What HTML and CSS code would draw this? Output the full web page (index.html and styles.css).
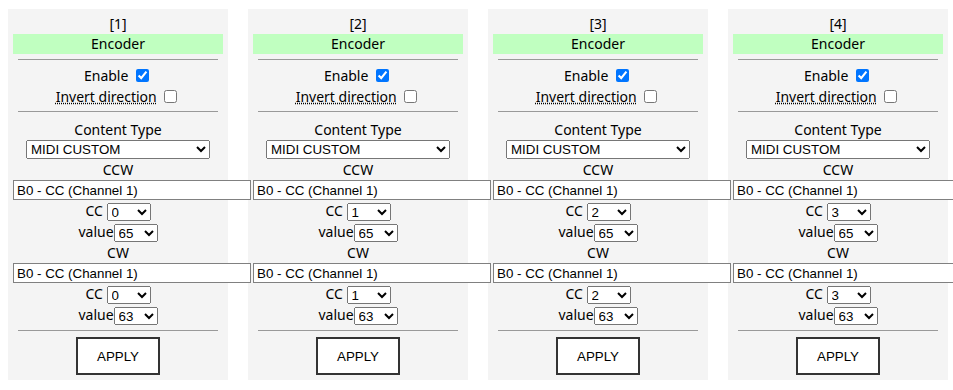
FILE: index.html
```html
<!DOCTYPE html>
<html lang="en">

<head>
    <meta charset="UTF-8">
    <meta name="viewport" content="width=device-width, initial-scale=1.0">
    <title>Encoders</title>
    <link rel="stylesheet" href="styles.css">
</head>

<body>

    <div class="board">

        <div class="enc">
            <div class="idx">[1]</div>
            <div class="head">Encoder</div>
            <hr>
            <div class="row">Enable <input type="checkbox" checked></div>
            <div class="row"><abbr title="Swap CW and CCW">Invert direction</abbr> <input type="checkbox"></div>
            <hr class="mid">
            <div class="label">Content Type</div>
            <select class="type"><option>MIDI CUSTOM</option><option>KEYBOARD</option></select>
            <div class="label">CCW</div>
            <input class="msg" type="text" value="B0 - CC (Channel 1)">
            <div class="pair">CC <select class="num"><option selected>0</option><option>1</option><option>2</option><option>3</option></select></div>
            <div class="pair">value<select class="num"><option>63</option><option selected>65</option></select></div>
            <div class="label">CW</div>
            <input class="msg" type="text" value="B0 - CC (Channel 1)">
            <div class="pair">CC <select class="num"><option selected>0</option><option>1</option><option>2</option><option>3</option></select></div>
            <div class="pair">value<select class="num"><option selected>63</option><option>65</option></select></div>
            <hr class="end">
            <button class="apply">APPLY</button>
        </div>

        <div class="enc">
            <div class="idx">[2]</div>
            <div class="head">Encoder</div>
            <hr>
            <div class="row">Enable <input type="checkbox" checked></div>
            <div class="row"><abbr title="Swap CW and CCW">Invert direction</abbr> <input type="checkbox"></div>
            <hr class="mid">
            <div class="label">Content Type</div>
            <select class="type"><option>MIDI CUSTOM</option><option>KEYBOARD</option></select>
            <div class="label">CCW</div>
            <input class="msg" type="text" value="B0 - CC (Channel 1)">
            <div class="pair">CC <select class="num"><option>0</option><option selected>1</option><option>2</option><option>3</option></select></div>
            <div class="pair">value<select class="num"><option>63</option><option selected>65</option></select></div>
            <div class="label">CW</div>
            <input class="msg" type="text" value="B0 - CC (Channel 1)">
            <div class="pair">CC <select class="num"><option>0</option><option selected>1</option><option>2</option><option>3</option></select></div>
            <div class="pair">value<select class="num"><option selected>63</option><option>65</option></select></div>
            <hr class="end">
            <button class="apply">APPLY</button>
        </div>

        <div class="enc">
            <div class="idx">[3]</div>
            <div class="head">Encoder</div>
            <hr>
            <div class="row">Enable <input type="checkbox" checked></div>
            <div class="row"><abbr title="Swap CW and CCW">Invert direction</abbr> <input type="checkbox"></div>
            <hr class="mid">
            <div class="label">Content Type</div>
            <select class="type"><option>MIDI CUSTOM</option><option>KEYBOARD</option></select>
            <div class="label">CCW</div>
            <input class="msg" type="text" value="B0 - CC (Channel 1)">
            <div class="pair">CC <select class="num"><option>0</option><option>1</option><option selected>2</option><option>3</option></select></div>
            <div class="pair">value<select class="num"><option>63</option><option selected>65</option></select></div>
            <div class="label">CW</div>
            <input class="msg" type="text" value="B0 - CC (Channel 1)">
            <div class="pair">CC <select class="num"><option>0</option><option>1</option><option selected>2</option><option>3</option></select></div>
            <div class="pair">value<select class="num"><option selected>63</option><option>65</option></select></div>
            <hr class="end">
            <button class="apply">APPLY</button>
        </div>

        <div class="enc">
            <div class="idx">[4]</div>
            <div class="head">Encoder</div>
            <hr>
            <div class="row">Enable <input type="checkbox" checked></div>
            <div class="row"><abbr title="Swap CW and CCW">Invert direction</abbr> <input type="checkbox"></div>
            <hr class="mid">
            <div class="label">Content Type</div>
            <select class="type"><option>MIDI CUSTOM</option><option>KEYBOARD</option></select>
            <div class="label">CCW</div>
            <input class="msg" type="text" value="B0 - CC (Channel 1)">
            <div class="pair">CC <select class="num"><option>0</option><option>1</option><option>2</option><option selected>3</option></select></div>
            <div class="pair">value<select class="num"><option>63</option><option selected>65</option></select></div>
            <div class="label">CW</div>
            <input class="msg" type="text" value="B0 - CC (Channel 1)">
            <div class="pair">CC <select class="num"><option>0</option><option>1</option><option>2</option><option selected>3</option></select></div>
            <div class="pair">value<select class="num"><option selected>63</option><option>65</option></select></div>
            <hr class="end">
            <button class="apply">APPLY</button>
        </div>

    </div>

</body>

</html>
```

FILE: styles.css
```css
body {
    margin: 0;
    overflow: hidden;
    background-color: #fff;
    color: #000;
    font-family: 'Noto Sans', 'Open Sans', sans-serif;
    font-size: 14px;
}

.board {
    display: flex;
    gap: 20px;
    padding: 9px 0 0 8px;
    align-items: flex-start;
}

.enc {
    width: 220px;
    flex: none;
    box-sizing: border-box;
    padding: 5px;
    background-color: #f4f4f4;
    text-align: center;
}

.idx,
.head {
    line-height: 20px;
    height: 20px;
}

.head {
    background-color: #c0ffc0;
}

hr {
    border: 0;
    border-top: 1px solid #999;
    height: 0;
    margin: 5px 5px 5px;
}

hr.mid {
    margin: 4px 5px 7px;
}

hr.end {
    margin: 5px 5px 6px;
}

.row {
    height: 21px;
    line-height: 21px;
}

.row input {
    margin: 0 3px 0 4px;
    vertical-align: -1px;
}

abbr {
    text-decoration: underline dotted;
}

.label {
    height: 21px;
    line-height: 21px;
}

select {
    font-family: 'Liberation Sans', Arial, sans-serif;
    font-size: 13.33px;
}

.type {
    display: block;
    width: 184px;
    height: 19px;
    margin: 0 auto;
}

.msg {
    position: relative;
    display: block;
    box-sizing: border-box;
    width: 238px;
    height: 20px;
    margin: 0;
    padding: 1px 3px;
    border: 1px solid #808080;
    border-radius: 0;
    background-color: #fff;
    font-family: 'Liberation Sans', Arial, sans-serif;
    font-size: 13.33px;
    color: #000;
}

.pair {
    height: 20px;
    line-height: 20px;
    margin-top: 1px;
}

.num {
    width: 44px;
    height: 18px;
    vertical-align: middle;
}

.apply {
    width: 84px;
    height: 38px;
    margin: 0 auto;
    display: block;
    background-color: #fff;
    border: 2px solid #333;
    border-radius: 0;
    font-family: 'Liberation Sans', Arial, sans-serif;
    font-size: 13.33px;
    color: #000;
    cursor: pointer;
}
```
